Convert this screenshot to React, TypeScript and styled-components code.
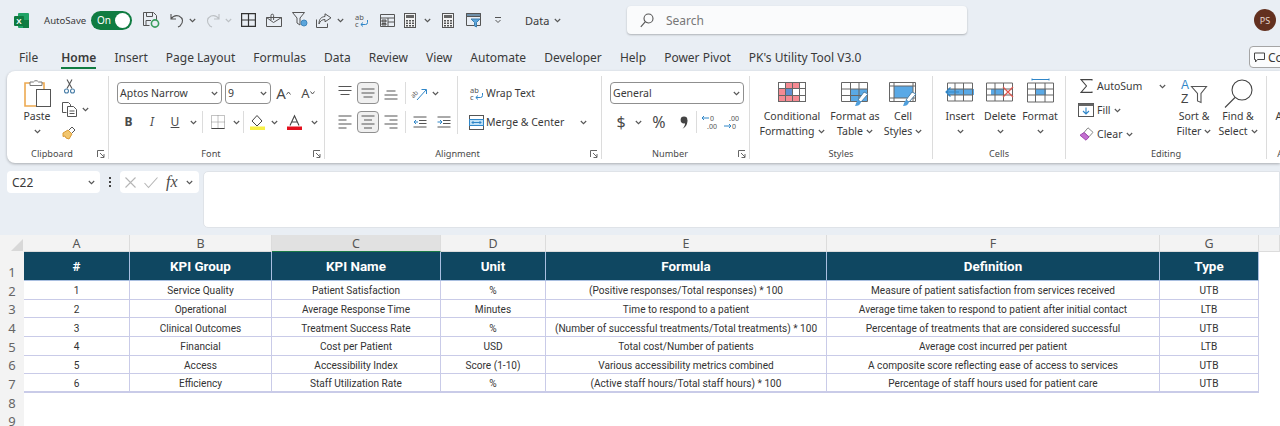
import React from "react";
import styled, { createGlobalStyle } from "styled-components";

// Data
const tabs = ["File", "Home", "Insert", "Page Layout", "Formulas", "Data", "Review", "View", "Automate", "Developer", "Help", "Power Pivot", "PK's Utility Tool V3.0"];

const columns = [
  { letter: "A", title: "#" },
  { letter: "B", title: "KPI Group" },
  { letter: "C", title: "KPI Name" },
  { letter: "D", title: "Unit" },
  { letter: "E", title: "Formula" },
  { letter: "F", title: "Definition" },
  { letter: "G", title: "Type" },
];

const rows = [
  ["1", "Service Quality", "Patient Satisfaction", "%", "(Positive responses/Total responses) * 100", "Measure of patient satisfaction from services received", "UTB"],
  ["2", "Operational", "Average Response Time", "Minutes", "Time to respond to a patient", "Average time taken to respond to patient after initial contact", "LTB"],
  ["3", "Clinical Outcomes", "Treatment Success Rate", "%", "(Number of successful treatments/Total treatments) * 100", "Percentage of treatments that are considered successful", "UTB"],
  ["4", "Financial", "Cost per Patient", "USD", "Total cost/Number of patients", "Average cost incurred per patient", "LTB"],
  ["5", "Access", "Accessibility Index", "Score (1-10)", "Various accessibility metrics combined", "A composite score reflecting ease of access to services", "UTB"],
  ["6", "Efficiency", "Staff Utilization Rate", "%", "(Active staff hours/Total staff hours) * 100", "Percentage of staff hours used for patient care", "UTB"],
];

// Styled Components
const GlobalStyle = createGlobalStyle`
  html, body { margin: 0; padding: 0; background: #e9eef4; }
  * { box-sizing: border-box; }
`;

const Page = styled.div`
  width: 1280px;
  height: 426px;
  overflow: hidden;
  background: #e9eef4;
  font-family: "Noto Sans", "Open Sans", sans-serif;
  color: #3a3a3a;
`;

const TitleBar = styled.div`
  height: 40px;
  display: flex;
  align-items: center;
  padding: 0 4px 0 14px;
`;

const AutoSaveLabel = styled.span`
  font-size: 9.6px;
  width: 47px;
  margin-left: 15px;
`;

const Toggle = styled.div`
  width: 41px;
  height: 19px;
  border-radius: 10px;
  background: #107c41;
  color: #fff;
  font-size: 10px;
  display: flex;
  align-items: center;
  justify-content: space-between;
  padding: 0 2px 0 6px;
  margin-right: 11px;
`;

const ToggleKnob = styled.span`
  width: 15px;
  height: 15px;
  border-radius: 50%;
  background: #fff;
`;

const Slot = styled.span<{ $w: number }>`
  width: ${({ $w }) => $w}px;
  flex: none;
  display: inline-flex;
  align-items: center;
  justify-content: center;
`;

const DataMenu = styled.span`
  font-size: 11px;
  display: inline-flex;
  align-items: center;
  gap: 5px;
  margin-left: 11px;
  width: 102px;
`;

const SearchBox = styled.div`
  width: 340px;
  height: 28px;
  background: #fafbfc;
  border-radius: 4px;
  box-shadow: 0 1px 2px rgba(0, 0, 0, 0.25);
  display: flex;
  align-items: center;
  gap: 12px;
  padding-left: 13px;
  font-size: 12px;
  color: #777;
`;

const Avatar = styled.div`
  width: 22px;
  height: 22px;
  margin-left: auto;
  border-radius: 50%;
  background: #63301f;
  color: #e8d8d0;
  font-size: 9px;
  display: flex;
  align-items: center;
  justify-content: center;
`;

const TabRow = styled.div`
  height: 31px;
  display: flex;
  align-items: flex-start;
  gap: 18.1px;
  padding: 7px 0 0 19px;
`;

const Tab = styled.span<{ $active?: boolean }>`
  height: 22px;
  font-size: 12px;
  line-height: 21px;
  font-weight: ${({ $active }) => ($active ? 600 : 400)};
  color: #3a3a3a;
  white-space: nowrap;
  border-bottom: ${({ $active }) => ($active ? "2px solid #107c41" : "none")};
  &:first-child { margin-right: 5px; }
`;

const CommentsButton = styled.div`
  margin-left: auto;
  margin-right: -32px;
  width: 63px;
  height: 22px;
  margin-top: -1px;
  flex: none;
  background: #fbfcfd;
  border: 1px solid #a5a5a5;
  border-radius: 4px;
  display: flex;
  align-items: center;
  gap: 3px;
  padding-left: 4px;
  font-size: 12px;
`;

const Ribbon = styled.div`
  margin-left: 7px;
  height: 92px;
  background: #fff;
  border-radius: 8px 0 0 8px;
  box-shadow: 0 1px 3px rgba(0, 0, 0, 0.28);
  display: flex;
  padding-top: 5px;
  overflow: hidden;
`;

const Group = styled.section<{ $w: number }>`
  width: ${({ $w }) => $w}px;
  flex: none;
  height: 83px;
  display: flex;
  flex-direction: column;
  border-right: 1px solid #dcdcdc;
`;

const GroupBody = styled.div<{ $pl: number }>`
  height: 72px;
  display: flex;
  padding-left: ${({ $pl }) => $pl}px;
`;

const GroupFooter = styled.div`
  height: 11px;
  display: flex;
  align-items: center;
  font-size: 9.2px;
  color: #4a4a4a;
`;

const GroupLabel = styled.span`
  flex: 1;
  text-align: center;
`;

const Launcher = styled.span`
  width: 11px;
  flex: none;
  display: flex;
  justify-content: flex-start;
`;

const SmallRows = styled.div<{ $w?: number; $divider?: boolean }>`
  width: ${({ $w }) => ($w ? `${$w}px` : "auto")};
  padding-top: 6px;
  display: flex;
  flex-direction: column;
  gap: 7px;
  flex: none;
  ${({ $divider }) => ($divider ? "border-right: 1px solid #dcdcdc; height: 58px;" : "")}
`;

const SmallRow = styled.div<{ $gap?: number }>`
  height: 22px;
  display: flex;
  align-items: center;
  gap: ${({ $gap }) => $gap ?? 0}px;
  font-size: 10.5px;
  white-space: nowrap;
`;

const Select = styled.div<{ $w: number }>`
  width: ${({ $w }) => $w}px;
  height: 22px;
  flex: none;
  border: 1px solid #8f8f8f;
  border-radius: 4px;
  display: flex;
  align-items: center;
  justify-content: space-between;
  padding: 0 3px 0 2px;
  font-size: 10.5px;
`;

const ToolButton = styled.span<{ $pressed?: boolean }>`
  width: 22px;
  height: 22px;
  flex: none;
  border-radius: 4px;
  display: inline-flex;
  align-items: center;
  justify-content: center;
  background: ${({ $pressed }) => ($pressed ? "#f0f0f0" : "transparent")};
  border: ${({ $pressed }) => ($pressed ? "1px solid #8f8f8f" : "none")};
`;

const Divider = styled.span`
  width: 1px;
  height: 22px;
  flex: none;
  background: #dcdcdc;
  margin: 0 2px;
`;

const Glyph = styled.span<{ $size: number; $weight?: number; $italic?: boolean; $serif?: boolean }>`
  font-size: ${({ $size }) => $size}px;
  font-weight: ${({ $weight }) => $weight ?? 400};
  font-style: ${({ $italic }) => ($italic ? "italic" : "normal")};
  font-family: ${({ $serif }) => ($serif ? '"Liberation Serif", serif' : "inherit")};
  line-height: 1;
  color: #4a4a4a;
`;

const UnderlinedGlyph = styled(Glyph)`
  text-decoration: underline;
`;

const LargeButton = styled.div<{ $w: number }>`
  width: ${({ $w }) => $w}px;
  flex: none;
  display: flex;
  flex-direction: column;
  align-items: center;
  font-size: 10.5px;
  line-height: 15px;
  text-align: center;
  white-space: nowrap;
  color: #3a3a3a;
`;

const LargeIcon = styled.div<{ $top?: number }>`
  height: 33px;
  padding-top: ${({ $top }) => $top ?? 6}px;
  display: flex;
  align-items: flex-start;
  justify-content: center;
`;

const ButtonLine = styled.span`
  height: 15px;
  display: inline-flex;
  align-items: center;
  gap: 3px;
`;

const ClipboardTools = styled.div`
  margin-left: 2px;
  padding-top: 3px;
  display: flex;
  flex-direction: column;
  gap: 9px;
`;

const ToolLine = styled.div`
  height: 14px;
  display: flex;
  align-items: center;
`;

const EditingRows = styled.div`
  width: 94px;
  flex: none;
  margin-top: -2px;
  display: flex;
  flex-direction: column;
  font-size: 10.5px;
`;

const EditingRow = styled.div`
  height: 24px;
  display: flex;
  align-items: center;
  gap: 3px;
`;

const FormulaBar = styled.div`
  height: 57px;
  margin-top: 8px;
  padding-left: 7px;
  display: flex;
  align-items: flex-start;
`;

const NameBox = styled.div`
  width: 93px;
  height: 22px;
  background: #fff;
  border-radius: 4px;
  display: flex;
  align-items: center;
  justify-content: space-between;
  padding: 0 5px 0 5px;
  font-size: 12px;
`;

const Dots = styled.div`
  width: 20px;
  height: 22px;
  display: flex;
  flex-direction: column;
  align-items: center;
  justify-content: center;
  gap: 2px;
`;

const Dot = styled.span`
  width: 2px;
  height: 2px;
  background: #444;
`;

const FunctionBox = styled.div`
  width: 79px;
  height: 22px;
  background: #fff;
  border-radius: 4px;
  display: flex;
  align-items: center;
  gap: 8px;
  padding-left: 5px;
  color: #444;
`;

const FormulaInput = styled.div`
  flex: 1;
  height: 57px;
  margin-left: 4px;
  background: #fff;
  border: 1px solid #dfe3e8;
  border-radius: 5px 0 0 5px;
`;

const Sheet = styled.div`
  margin-top: 7px;
  height: 191px;
  background: #fff;
  display: grid;
  grid-template-columns: 24px 106px 142px 169px 105px 281px 333px 99px 1fr;
  grid-template-rows: 17px 29px repeat(8, 18.67px);
  font-family: Roboto, "Liberation Sans", sans-serif;
`;

const Corner = styled.div`
  background: #f3f3f3;
  display: flex;
  align-items: flex-end;
  justify-content: flex-end;
  padding: 0 1px 1px 0;
`;

const CornerMark = styled.span`
  width: 0;
  height: 0;
  border-left: 12px solid transparent;
  border-bottom: 12px solid #d8d8d8;
`;

const ColumnHead = styled.div<{ $selected?: boolean }>`
  background: ${({ $selected }) => ($selected ? "#e1e1e1" : "#f3f3f3")};
  border-right: 1px solid #dcdcdc;
  border-bottom: 1px solid ${({ $selected }) => ($selected ? "#1b7a47" : "#dcdcdc")};
  color: #555;
  font-size: 12.5px;
  font-family: "Noto Sans", sans-serif;
  display: flex;
  align-items: center;
  justify-content: center;
`;

const RowHead = styled.div`
  background: #f3f3f3;
  color: #666;
  font-size: 13px;
  font-family: "Noto Sans", sans-serif;
  display: flex;
  align-items: flex-end;
  justify-content: center;
`;

const HeaderCell = styled.div`
  background: #0f4761;
  color: #fff;
  font-size: 13.4px;
  font-weight: 700;
  border-right: 1px solid #a9bfe0;
  border-bottom: 1px solid #a9bfe0;
  display: flex;
  align-items: center;
  justify-content: center;
`;

const Cell = styled.div<{ $last?: boolean }>`
  color: #333;
  font-size: 10.1px;
  padding-top: 2px;
  border-right: 1px solid #c9cbe8;
  border-bottom: ${({ $last }) => ($last ? "2px" : "1px")} solid #c9cbe8;
  display: flex;
  align-items: center;
  justify-content: center;
  white-space: nowrap;
`;

const EmptyCell = styled.div`
  background: #fff;
`;

const BlankRow = styled.div`
  grid-column: 2 / -1;
  background: #fff;
`;

const Svg = styled.svg`
  display: block;
  flex: none;
  overflow: visible;
`;

// Icons
const Chevron = ({ color = "#555" }: { color?: string }) => (
  <Svg width="7" height="5" viewBox="0 0 7 5" fill="none" stroke={color} strokeWidth="1.1">
    <path d="M.8 1l2.7 2.7L6.2 1" />
  </Svg>
);

const ExcelLogo = () => (
  <Svg width="15" height="15" viewBox="0 0 15 15">
    <rect x="4" y="0" width="11" height="15" rx="1" fill="#21a366" />
    <rect x="9" y="7" width="6" height="8" fill="#107c41" />
    <rect x="0" y="3" width="10" height="10" rx="1" fill="#0e7a3f" />
    <text x="5" y="11" textAnchor="middle" fontSize="8" fontWeight="700" fill="#fff" fontFamily="Liberation Sans">X</text>
  </Svg>
);

const SaveIcon = () => (
  <Svg width="17" height="16" viewBox="0 0 17 16" fill="none" stroke="#555">
    <path d="M.5.5h10l3 3v5M.5.5v13h6M3.5.5v4h6v-4M3 13.5v-5h5" />
    <circle cx="12" cy="11.5" r="3.6" stroke="#3a9d5d" strokeWidth="1.6" />
  </Svg>
);

const UndoIcon = () => (
  <Svg width="15" height="15" viewBox="0 0 15 15" fill="none" stroke="#555" strokeWidth="1.1">
    <path d="M1 1v5h5M1 6c2-3 5-4 8-3 4 2 5 6 1 10l-2 1" />
  </Svg>
);

const RedoIcon = () => (
  <Svg width="15" height="15" viewBox="0 0 15 15" fill="none" stroke="#bcc0c4" strokeWidth="1.1">
    <path d="M14 1v5H9M14 6c-2-3-5-4-8-3-4 2-5 6-1 10l2 1" />
  </Svg>
);

const TableIcon = () => (
  <Svg width="15" height="14" viewBox="0 0 15 14" fill="none" stroke="#333" strokeWidth="1.2">
    <path d="M.6.6h13.8v12.8H.6zM7.5.6v12.8M.6 7h13.8" />
  </Svg>
);

const MailIcon = () => (
  <Svg width="16" height="13" viewBox="0 0 16 13" fill="none" stroke="#555">
    <path d="M.5 3.5h15v9H.5zM.5 3.5l7 5 8-5" />
    <path d="M5 6V1.5a1.3 1.3 0 0 1 2.6 0V6" />
  </Svg>
);

const FilterGearIcon = () => (
  <Svg width="17" height="16" viewBox="0 0 17 16" fill="none" stroke="#555">
    <path d="M.5.5h12L8 6v7L5 11V6z" />
    <circle cx="12" cy="11" r="3" fill="#5aa5dc" stroke="#3f86bb" />
  </Svg>
);

const ShareIcon = () => (
  <Svg width="16" height="15" viewBox="0 0 16 15" fill="none" stroke="#555">
    <path d="M.5 6.5v8h11v-4M9 .8l6 4-6 4V6.5C6 6.500 4 8 3 11c0-5 2-7 6-7.500z" />
  </Svg>
);

const WrapIcon = () => (
  <Svg width="14" height="15" viewBox="0 0 14 15">
    <text x="0" y="6.500" fontSize="7.500" fill="#555" fontFamily="Noto Sans">ab</text>
    <text x="0" y="14" fontSize="7.500" fill="#555" fontFamily="Noto Sans">c</text>
    <path d="M12.500 7v2.500a2 2 0 0 1-2 2H6m2-2l-2.200 2 2.200 2" fill="none" stroke="#2f86c8" />
  </Svg>
);

const FormIcon = () => (
  <Svg width="15" height="15" viewBox="0 0 15 15" fill="none" stroke="#555">
    <path d="M.5 1.500h14v12H.5zM.5 5h14M8 5v8.500M8 9h6.500" />
    <path d="M2 7h4v2H2zM2 10.500h4v1.500H2z" fill="#9a9a9a" />
  </Svg>
);

const CalcIcon = () => (
  <Svg width="12" height="15" viewBox="0 0 12 15">
    <rect x=".5" y=".5" width="11" height="14" fill="#f3f3f3" stroke="#555" />
    <rect x="2" y="2" width="8" height="3" fill="#666" />
    <path d="M2 7h2v1.500H2zM5 7h2v1.500H5zM8 7h2v1.500H8zM2 9.500h2V11H2zM5 9.500h2V11H5zM8 9.500h2V11H8zM2 12h2v1.500H2zM5 12h2v1.500H5zM8 12h2v1.500H8z" fill="#555" />
  </Svg>
);

const TableFilterIcon = () => (
  <Svg width="15" height="15" viewBox="0 0 15 15" fill="none" stroke="#555">
    <path d="M.5.500h14v12H.5z" />
    <path d="M.5.500h14v3H.5z" fill="#6f8fa8" />
    <path d="M5 6h9l-3.500 3.500V14L8.500 13V9.500z" fill="#5aa5dc" stroke="#3f7fae" />
  </Svg>
);

const QuickAccessMore = () => (
  <Svg width="8" height="8" viewBox="0 0 8 8" fill="none" stroke="#555">
    <path d="M1 1.500h6M1.500 4L4 6.500 6.500 4" />
  </Svg>
);

const SearchIcon = () => (
  <Svg width="14" height="15" viewBox="0 0 14 15" fill="none" stroke="#555" strokeWidth="1.1">
    <circle cx="8.500" cy="5.500" r="4.500" />
    <path d="M5.200 8.800L.8 13.800" />
  </Svg>
);

const CommentIcon = () => (
  <Svg width="11" height="11" viewBox="0 0 11 11" fill="none" stroke="#444">
    <path d="M.5 1h10v6.500H3.500L1.500 10V7.500h-1z" />
  </Svg>
);

const PasteIcon = () => (
  <Svg width="27" height="28" viewBox="0 0 27 28" fill="none">
    <path d="M6.500 4H1v23h11" stroke="#eda950" strokeWidth="1.600" />
    <path d="M14 4h6v6" stroke="#eda950" strokeWidth="1.600" />
    <path d="M6 6.500V3h3.500a3 3 0 0 1 5 0H18v3.500z" fill="#fff" stroke="#777" />
    <rect x="12.500" y="10.500" width="14" height="17" fill="#fff" stroke="#555" />
  </Svg>
);

const CutIcon = () => (
  <Svg width="11" height="15" viewBox="0 0 11 15" fill="none" stroke="#4a7fa8" strokeWidth="1.1">
    <path d="M3 9.500L8 .5M8 9.500L3 .5" stroke="#555" />
    <circle cx="2.500" cy="12" r="2" />
    <circle cx="8.500" cy="12" r="2" />
  </Svg>
);

const CopyIcon = () => (
  <Svg width="15" height="15" viewBox="0 0 15 15" fill="none" stroke="#555">
    <path d="M.5.500h6l2 2v2M.5.500v10h4" />
    <path d="M5.500 4.500h6l3 3v7h-9zM7.500 9h5M7.500 11.500h5" />
  </Svg>
);

const PainterIcon = () => (
  <Svg width="15" height="15" viewBox="0 0 15 15" fill="none">
    <path d="M1 8l5-3 4 4-3 5-3-1-1-2-2 .5z" fill="#f2c66e" stroke="#d99a35" />
    <path d="M7 5l3-3 3 3-3 3" fill="#fff" stroke="#555" />
  </Svg>
);

const FontGrowIcon = ({ up }: { up?: boolean }) => (
  <Svg width="5" height="4" viewBox="0 0 5 4" fill="none" stroke="#555">
    <path d={up ? "M.5 3.500l2-2.500 2 2.500" : "M.5.500l2 2.500 2-2.500"} />
  </Svg>
);

const BorderIcon = () => (
  <Svg width="14" height="14" viewBox="0 0 14 14" fill="none" stroke="#888" strokeDasharray="1 1">
    <path d="M.5.500h13v13H.5zM7 .5v13M.5 7h13" />
    <path d="M.5 13.500h13" strokeDasharray="none" stroke="#444" />
  </Svg>
);

const FillIcon = () => (
  <Svg width="15" height="15" viewBox="0 0 15 15" fill="none">
    <path d="M7 .5L2 6l5 5 5-5z" fill="#fff" stroke="#444" />
    <rect x="0" y="11.500" width="15" height="3.500" fill="#f7f046" />
  </Svg>
);

const FontColorIcon = () => (
  <Svg width="15" height="15" viewBox="0 0 15 15" fill="none">
    <path d="M3 10.500L7.500 .8l4.500 9.700M4.500 7h6" stroke="#444" strokeWidth="1.100" />
    <rect x="0" y="11.500" width="15" height="3.500" fill="#e3101e" />
  </Svg>
);

const AlignLines = ({ widths, align, top = 1 }: { widths: number[]; align: "left" | "center" | "right"; top?: number }) => (
  <Svg width="14" height="14" viewBox="0 0 14 14" stroke="#555" strokeWidth="1.1">
    {widths.map((w, i) => {
      const x = align === "left" ? 0.5 : align === "right" ? 13.5 - w : 7 - w / 2;
      const y = top + i * 4;
      return <line key={i} x1={x} x2={x + w} y1={y} y2={y} />;
    })}
  </Svg>
);

const OrientIcon = () => (
  <Svg width="18" height="17" viewBox="0 0 18 17" fill="none">
    <text x="1" y="12" fontSize="6.500" fill="#555" fontFamily="Noto Sans" transform="rotate(-45 4 10)">ab</text>
    <path d="M7 15L16 5M11.500 4.500H16.500V9" stroke="#2f86c8" />
  </Svg>
);

const IndentIcon = ({ flip }: { flip?: boolean }) => (
  <Svg width="14" height="12" viewBox="0 0 14 12" stroke="#555">
    <path d="M.5 1h13M6 4.500h7.500M6 7.500h7.500M.5 11h13" fill="none" />
    <path d={flip ? "M.5 6h4M3 4l2 2-2 2" : "M1 6h4M3 4L1 6l2 2"} fill="none" stroke="#2f86c8" />
  </Svg>
);

const MergeIcon = () => (
  <Svg width="15" height="15" viewBox="0 0 15 15" fill="none" stroke="#555">
    <rect x=".5" y=".5" width="14" height="14" />
    <rect x=".5" y="4.500" width="14" height="6" fill="#bfe0f5" stroke="#2f86c8" />
    <path d="M3 7.500h9M4.500 6L3 7.500 4.500 9M10.500 6L12 7.500 10.500 9" stroke="#2f86c8" />
  </Svg>
);

const CommaIcon = () => (
  <Svg width="8" height="13" viewBox="0 0 8 13">
    <circle cx="4" cy="4" r="3.400" fill="#444" />
    <path d="M5 6.500L7.300 4C7.800 8 6 11 2.500 12.800 4.500 10.500 5.300 8.500 5 6.500z" fill="#444" />
  </Svg>
);

const DecimalIcon = ({ less }: { less?: boolean }) => (
  <Svg width="16" height="16" viewBox="0 0 16 16">
    <text x={less ? 5 : 8} y="7" fontSize="7" fill="#555" fontFamily="Noto Sans">{less ? ".00" : "0"}</text>
    <text x={less ? 8 : 5} y="15" fontSize="7" fill="#555" fontFamily="Noto Sans">{less ? "0" : ".00"}</text>
    <path d={less ? "M0 12h7M5 10l2 2-2 2" : "M0 4h7M2 2L0 4l2 2"} fill="none" stroke="#2f86c8" />
  </Svg>
);

const GridLines = ({ w, h, xs, ys, children }: { w: number; h: number; xs: number[]; ys: number[]; children?: React.ReactNode }) => (
  <Svg width={w} height={h} viewBox={`0 0 ${w} ${h}`} fill="none">
    {children}
    <g stroke="#666">
      <rect x=".5" y=".5" width={w - 1} height={h - 1} />
      {xs.map((x) => <line key={x} x1={x} x2={x} y1="0" y2={h} />)}
      {ys.map((y) => <line key={y} x1="0" x2={w} y1={y} y2={y} />)}
    </g>
  </Svg>
);

const Brush = ({ x, y }: { x: number; y: number }) => (
  <g transform={`translate(${x} ${y})`}>
    <path d="M8 0L12 2 5 10 2 8z" fill="#fff" stroke="#4a7fa8" />
    <path d="M2 8l3 2c-1 3-3 4-6 4 1-2 1-4 3-6z" fill="#4f9fdc" />
  </g>
);

const ConditionalIcon = () => (
  <GridLines w={28} h={20} xs={[7.5, 14.5, 21.5]} ys={[6.5, 13.5]}>
    <path d="M7 0h14v7H7zM0 7h7v7H0zM7 14h14v6H7z" fill="#f58a92" />
    <path d="M7 7h7v7H7z" fill="#5f8fd0" />
    <path d="M0 14h7v6H0z" fill="#f58a92" />
  </GridLines>
);

const FormatTableIcon = () => (
  <Svg width="29" height="25" viewBox="0 0 29 25" fill="none">
    <path d="M10 7h16v13H10z" fill="#5aa9e6" />
    <path d="M.5.500h26v19H.5zM.5 7h26M.5 13.500h26M9.500.5v19M18 .5v19" stroke="#666" />
    <Brush x={15} y={10} />
  </Svg>
);

const CellStylesIcon = () => (
  <Svg width="29" height="25" viewBox="0 0 29 25" fill="none">
    <path d="M5 4h19v12H5z" fill="#5aa9e6" />
    <path d="M.5.500h26v19H.5zM.5 4h26M5 .5v19M24 .5v19M.5 16h26" stroke="#666" />
    <Brush x={15} y={10} />
  </Svg>
);

const InsertCellsIcon = () => (
  <Svg width="30" height="20" viewBox="0 0 30 20" fill="none">
    <path d="M3 7h26v6H3z" fill="#5aa9e6" />
    <path d="M2.500 1h25v18h-25zM2.500 7h25M2.500 13h25M10 1v18M18.500 1v18" stroke="#666" />
    <path d="M14 10H1M5.500 5.500L1 10l4.500 4.500" stroke="#2f86c8" strokeWidth="1.200" />
  </Svg>
);

const DeleteCellsIcon = () => (
  <Svg width="28" height="20" viewBox="0 0 28 20" fill="none">
    <path d="M5 7h13v6H5z" fill="#5aa9e6" />
    <path d="M.5 1h26v18H.5zM.5 7h26M.5 13h26M9 1v18M17.500 1v18" stroke="#666" />
    <path d="M17 5l10 10M27 5L17 15" stroke="#e0564e" strokeWidth="1.200" />
  </Svg>
);

const FormatCellsIcon = () => (
  <Svg width="27" height="25" viewBox="0 0 27 25" fill="none">
    <path d="M8 11h11v6H8z" fill="#5aa9e6" />
    <path d="M.5 5h26v19H.5zM.5 11h26M.5 17h26M8.500 5v19M18 5v19" stroke="#666" />
    <path d="M5 1.500h17M5 .5v2M22 .5v2" stroke="#2f86c8" />
  </Svg>
);

const SigmaIcon = () => (
  <Svg width="13" height="14" viewBox="0 0 13 14" fill="none" stroke="#444" strokeWidth="1.100">
    <path d="M12 1.500V.6H1l5.500 6.400L1 13.400h11v-1" />
  </Svg>
);

const FillDownIcon = () => (
  <Svg width="16" height="14" viewBox="0 0 16 14" fill="none">
    <rect x=".5" y=".5" width="15" height="13" stroke="#555" fill="#fff" />
    <rect x=".5" y=".5" width="15" height="2.500" fill="#666" />
    <path d="M8 4.500v6.500M5 8l3 3 3-3" stroke="#2f86c8" strokeWidth="1.100" />
  </Svg>
);

const ClearIcon = () => (
  <Svg width="15" height="14" viewBox="0 0 15 14" fill="none">
    <path d="M9 .8l5 4.500-4 4.500L5 5.500z" fill="#fff" stroke="#888" />
    <path d="M5 5.500l5 4.500-3 3.200-6-5z" fill="#c36fd0" stroke="#a04bb0" />
  </Svg>
);

const SortFilterIcon = () => (
  <Svg width="26" height="28" viewBox="0 0 26 28" fill="none">
    <text x="0" y="11" fontSize="12" fill="#2f86c8" fontFamily="Liberation Sans">A</text>
    <text x="0" y="24.800" fontSize="12" fill="#444" fontFamily="Liberation Sans">Z</text>
    <path d="M10.500 8.500h15l-5.500 7v9l-3.500-1.500v-7.500z" stroke="#555" strokeWidth="1.100" />
  </Svg>
);

const MagnifierIcon = () => (
  <Svg width="29" height="29" viewBox="0 0 29 29" fill="none" stroke="#444" strokeWidth="1.100">
    <circle cx="18" cy="11" r="10" />
    <path d="M11 18.500L1 28.500" />
  </Svg>
);

const LauncherIcon = () => (
  <Svg width="8" height="8" viewBox="0 0 8 8" fill="none" stroke="#666">
    <path d="M.5 7V.5H7M3 3l4 4M7 4v3.500H3.500" />
  </Svg>
);

const CrossIcon = () => (
  <Svg width="11" height="11" viewBox="0 0 11 11" fill="none" stroke="#b5b5b5" strokeWidth="1.100">
    <path d="M.5.500l10 10M10.500.5l-10 10" />
  </Svg>
);

const CheckIcon = () => (
  <Svg width="14" height="11" viewBox="0 0 14 11" fill="none" stroke="#b5b5b5" strokeWidth="1.100">
    <path d="M.5 6l4 4.500L13.500.5" />
  </Svg>
);

const Footer = ({ label, launcher }: { label: string; launcher?: boolean }) => (
  <GroupFooter>
    <GroupLabel>{label}</GroupLabel>
    {launcher && <Launcher><LauncherIcon /></Launcher>}
  </GroupFooter>
);

const App: React.FC = () => {
  return (
    <Page>
      <GlobalStyle />
      <TitleBar>
        <ExcelLogo />
        <AutoSaveLabel>AutoSave</AutoSaveLabel>
        <Toggle>On<ToggleKnob /></Toggle>
        <SaveIcon />
        <Slot $w={10} />
        <Slot $w={14}><UndoIcon /></Slot>
        <Slot $w={16}><Chevron /></Slot>
        <Slot $w={24}><RedoIcon /></Slot>
        <Slot $w={8}><Chevron color="#bcc0c4" /></Slot>
        <Slot $w={32}><TableIcon /></Slot>
        <Slot $w={20}><MailIcon /></Slot>
        <Slot $w={32}><FilterGearIcon /></Slot>
        <Slot $w={16}><ShareIcon /></Slot>
        <Slot $w={16}><Chevron /></Slot>
        <Slot $w={28}><WrapIcon /></Slot>
        <Slot $w={22}><FormIcon /></Slot>
        <Slot $w={24}><CalcIcon /></Slot>
        <Slot $w={10}><Chevron /></Slot>
        <Slot $w={32}><CalcIcon /></Slot>
        <Slot $w={18}><TableFilterIcon /></Slot>
        <Slot $w={32}><QuickAccessMore /></Slot>
        <DataMenu>Data <Chevron /></DataMenu>
        <SearchBox><SearchIcon />Search</SearchBox>
        <Avatar>PS</Avatar>
      </TitleBar>

      <TabRow>
        {tabs.map((tab) => (
          <Tab key={tab} $active={tab === "Home"}>{tab}</Tab>
        ))}
        <CommentsButton><CommentIcon />Comments</CommentsButton>
      </TabRow>

      <Ribbon>
        <Group $w={102}>
          <GroupBody $pl={9}>
            <LargeButton $w={42}>
              <LargeIcon $top={3}><PasteIcon /></LargeIcon>
              <ButtonLine>Paste</ButtonLine>
              <ButtonLine><Chevron /></ButtonLine>
            </LargeButton>
            <ClipboardTools>
              <ToolLine><Slot $w={18}><CutIcon /></Slot></ToolLine>
              <ToolLine><Slot $w={18}><CopyIcon /></Slot><Slot $w={14}><Chevron /></Slot></ToolLine>
              <ToolLine><Slot $w={18}><PainterIcon /></Slot></ToolLine>
            </ClipboardTools>
          </GroupBody>
          <Footer label="Clipboard" launcher />
        </Group>

        <Group $w={216}>
          <GroupBody $pl={8}>
            <SmallRows>
              <SmallRow>
                <Select $w={105}>Aptos Narrow<Chevron /></Select>
                <Slot $w={3} />
                <Select $w={46}>9<Chevron /></Select>
                <Slot $w={25}><Glyph $size={15}>A</Glyph><FontGrowIcon up /></Slot>
                <Slot $w={24}><Glyph $size={13}>A</Glyph><FontGrowIcon /></Slot>
              </SmallRow>
              <SmallRow>
                <Slot $w={23}><Glyph $size={12} $weight={700}>B</Glyph></Slot>
                <Slot $w={24}><Glyph $size={12} $italic>I</Glyph></Slot>
                <Slot $w={22}><UnderlinedGlyph $size={12}>U</UnderlinedGlyph></Slot>
                <Slot $w={14}><Chevron /></Slot>
                <Divider />
                <Slot $w={26}><BorderIcon /></Slot>
                <Slot $w={10}><Chevron /></Slot>
                <Divider />
                <Slot $w={22}><FillIcon /></Slot>
                <Slot $w={12}><Chevron /></Slot>
                <Slot $w={28}><FontColorIcon /></Slot>
                <Slot $w={12}><Chevron /></Slot>
              </SmallRow>
            </SmallRows>
          </GroupBody>
          <Footer label="Font" launcher />
        </Group>

        <Group $w={277}>
          <GroupBody $pl={9}>
            <SmallRows $w={124} $divider>
              <SmallRow $gap={1}>
                <ToolButton><AlignLines widths={[13, 13, 9]} align="center" top={0.5} /></ToolButton>
                <ToolButton $pressed><AlignLines widths={[13, 13, 9]} align="center" top={3} /></ToolButton>
                <ToolButton><AlignLines widths={[9, 13, 13]} align="center" top={5} /></ToolButton>
                <Divider />
                <Slot $w={20}><OrientIcon /></Slot>
                <Slot $w={10}><Chevron /></Slot>
              </SmallRow>
              <SmallRow $gap={1}>
                <ToolButton><AlignLines widths={[13, 8, 13, 8]} align="left" /></ToolButton>
                <ToolButton $pressed><AlignLines widths={[13, 8, 13, 8]} align="center" /></ToolButton>
                <ToolButton><AlignLines widths={[13, 8, 13, 8]} align="right" /></ToolButton>
                <Divider />
                <Slot $w={22}><IndentIcon /></Slot>
                <Slot $w={24}><IndentIcon flip /></Slot>
              </SmallRow>
            </SmallRows>
            <SmallRows $w={131}>
              <SmallRow>
                <Slot $w={9} /><Slot $w={19}><WrapIcon /></Slot>Wrap Text
              </SmallRow>
              <SmallRow>
                <Slot $w={9} /><Slot $w={19}><MergeIcon /></Slot>Merge &amp; Center<Slot $w={38}><Chevron /></Slot>
              </SmallRow>
            </SmallRows>
          </GroupBody>
          <Footer label="Alignment" launcher />
        </Group>

        <Group $w={148}>
          <GroupBody $pl={8}>
            <SmallRows>
              <SmallRow>
                <Select $w={134}>General<Chevron /></Select>
              </SmallRow>
              <SmallRow>
                <Slot $w={22}><Glyph $size={16}>$</Glyph></Slot>
                <Slot $w={12}><Chevron /></Slot>
                <Slot $w={30}><Glyph $size={16}>%</Glyph></Slot>
                <Slot $w={20}><CommaIcon /></Slot>
                <Divider />
                <Slot $w={22}><DecimalIcon /></Slot>
                <Slot $w={22}><DecimalIcon less /></Slot>
              </SmallRow>
            </SmallRows>
          </GroupBody>
          <Footer label="Number" launcher />
        </Group>

        <Group $w={183}>
          <GroupBody $pl={10}>
            <LargeButton $w={64}>
              <LargeIcon><ConditionalIcon /></LargeIcon>
              <ButtonLine>Conditional</ButtonLine>
              <ButtonLine>Formatting <Chevron /></ButtonLine>
            </LargeButton>
            <LargeButton $w={62}>
              <LargeIcon><FormatTableIcon /></LargeIcon>
              <ButtonLine>Format as</ButtonLine>
              <ButtonLine>Table <Chevron /></ButtonLine>
            </LargeButton>
            <LargeButton $w={34}>
              <LargeIcon><CellStylesIcon /></LargeIcon>
              <ButtonLine>Cell</ButtonLine>
              <ButtonLine>Styles <Chevron /></ButtonLine>
            </LargeButton>
          </GroupBody>
          <Footer label="Styles" />
        </Group>

        <Group $w={133}>
          <GroupBody $pl={7}>
            <LargeButton $w={40}>
              <LargeIcon><InsertCellsIcon /></LargeIcon>
              <ButtonLine>Insert</ButtonLine>
              <ButtonLine><Chevron /></ButtonLine>
            </LargeButton>
            <LargeButton $w={40}>
              <LargeIcon><DeleteCellsIcon /></LargeIcon>
              <ButtonLine>Delete</ButtonLine>
              <ButtonLine><Chevron /></ButtonLine>
            </LargeButton>
            <LargeButton $w={40}>
              <LargeIcon $top={2}><FormatCellsIcon /></LargeIcon>
              <ButtonLine>Format</ButtonLine>
              <ButtonLine><Chevron /></ButtonLine>
            </LargeButton>
          </GroupBody>
          <Footer label="Cells" />
        </Group>

        <Group $w={201}>
          <GroupBody $pl={12}>
            <EditingRows>
              <EditingRow><Slot $w={16}><SigmaIcon /></Slot>AutoSum<Slot $w={34}><Chevron /></Slot></EditingRow>
              <EditingRow><Slot $w={16}><FillDownIcon /></Slot>Fill <Chevron /></EditingRow>
              <EditingRow><Slot $w={16}><ClearIcon /></Slot>Clear <Chevron /></EditingRow>
            </EditingRows>
            <LargeButton $w={44}>
              <LargeIcon $top={2}><SortFilterIcon /></LargeIcon>
              <ButtonLine>Sort &amp;</ButtonLine>
              <ButtonLine>Filter <Chevron /></ButtonLine>
            </LargeButton>
            <LargeButton $w={44}>
              <LargeIcon $top={3}><MagnifierIcon /></LargeIcon>
              <ButtonLine>Find &amp;</ButtonLine>
              <ButtonLine>Select <Chevron /></ButtonLine>
            </LargeButton>
          </GroupBody>
          <Footer label="Editing" />
        </Group>

        <Group $w={54}>
          <GroupBody $pl={2}>
            <LargeButton $w={50}>
              <LargeIcon />
              <ButtonLine>Add-ins</ButtonLine>
            </LargeButton>
          </GroupBody>
          <Footer label="Add-ins" />
        </Group>
      </Ribbon>

      <FormulaBar>
        <NameBox>C22<Chevron /></NameBox>
        <Dots><Dot /><Dot /><Dot /></Dots>
        <FunctionBox>
          <CrossIcon />
          <CheckIcon />
          <Glyph $size={16} $italic $serif>fx</Glyph>
          <Chevron />
        </FunctionBox>
        <FormulaInput />
      </FormulaBar>

      <Sheet>
        <Corner><CornerMark /></Corner>
        {columns.map((col) => (
          <ColumnHead key={col.letter} $selected={col.letter === "C"}>{col.letter}</ColumnHead>
        ))}
        <ColumnHead />

        <RowHead>1</RowHead>
        {columns.map((col) => (
          <HeaderCell key={col.letter}>{col.title}</HeaderCell>
        ))}
        <EmptyCell />

        {rows.map((row, r) => (
          <React.Fragment key={r}>
            <RowHead>{r + 2}</RowHead>
            {row.map((value, c) => (
              <Cell key={c} $last={r === rows.length - 1}>{value}</Cell>
            ))}
            <EmptyCell />
          </React.Fragment>
        ))}

        <RowHead>8</RowHead>
        <BlankRow />
        <RowHead>9</RowHead>
      </Sheet>
    </Page>
  );
};

export default App;
